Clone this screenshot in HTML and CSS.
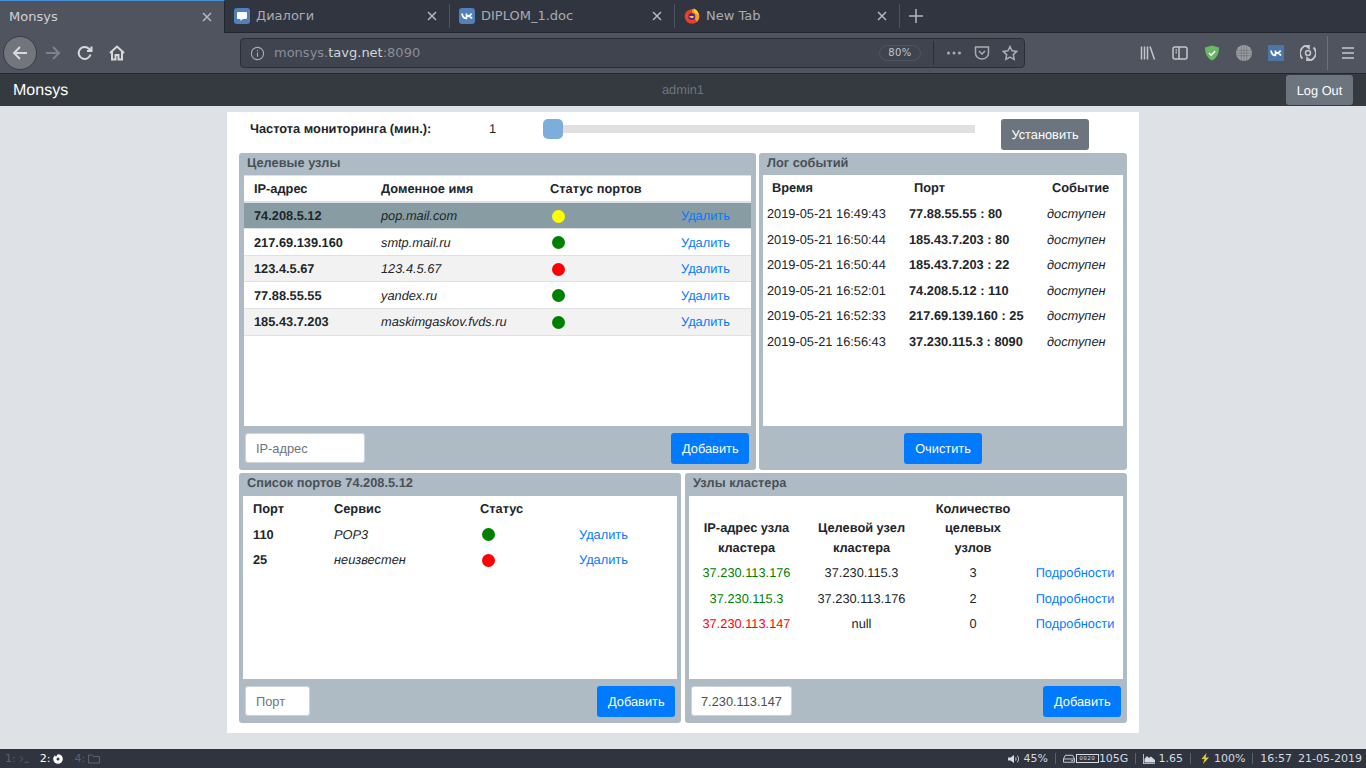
FILE: index.html
```html
<!DOCTYPE html>
<html lang="ru">
<head>
    <meta charset="UTF-8">
    <meta name="viewport" content="width=device-width, initial-scale=1.0">
    <title>Monsys</title>
    <link rel="stylesheet" href="styles.css">
</head>
<body>
    <!-- browser: tabs -->
    <div class="tabbar">
        <div class="tab tab-active">
            <span class="tab-title">Monsys</span>
            <svg class="tab-close" viewBox="0 0 12 12"><path d="M2 2l8 8M10 2l-8 8"/></svg>
        </div>
        <div class="tab">
            <svg class="favicon" viewBox="0 0 16 16"><rect width="16" height="16" rx="3" fill="#5181b8"/><path d="M4 4h8a1 1 0 0 1 1 1v5a1 1 0 0 1-1 1H9l-2.500 2v-2H4a1 1 0 0 1-1-1V5a1 1 0 0 1 1-1z" fill="#fff"/></svg>
            <span class="tab-title">Диалоги</span>
            <svg class="tab-close" viewBox="0 0 12 12"><path d="M2 2l8 8M10 2l-8 8"/></svg>
        </div>
        <div class="tab">
            <svg class="favicon" viewBox="0 0 16 16"><rect width="16" height="16" rx="3" fill="#5181b8"/><path d="M3 5.500c.5 3 2 5 4.500 5V5.500M12.500 5.500C12 7 10.500 8 8 8c2.500 0 4 1 5 2.500" fill="none" stroke="#fff" stroke-width="1.700"/></svg>
            <span class="tab-title">DIPLOM_1.doc</span>
            <svg class="tab-close" viewBox="0 0 12 12"><path d="M2 2l8 8M10 2l-8 8"/></svg>
        </div>
        <div class="tab">
            <svg class="favicon" viewBox="0 0 16 16"><circle cx="8" cy="8.500" r="7.300" fill="#e8412a"/><path d="M8 1.200a7.300 7.300 0 0 1 7.300 7.300c0 2-1 4-2.500 5.200L10 9 8 4z" fill="#ff9a1f"/><path d="M9.500 0.300c2.500 1 4.500 3 5.300 6.500L10.500 4.500z" fill="#ffd43a"/><circle cx="7.800" cy="8.600" r="3.500" fill="#4b2a9a"/><path d="M5 8h5l-1 2H7z" fill="#ffcb2e"/></svg>
            <span class="tab-title">New Tab</span>
            <svg class="tab-close" viewBox="0 0 12 12"><path d="M2 2l8 8M10 2l-8 8"/></svg>
        </div>
        <svg class="tab-new" viewBox="0 0 16 16"><path d="M8 1v14M1 8h14"/></svg>
    </div>

    <!-- browser: toolbar -->
    <div class="toolbar">
        <div class="nav-back">
            <svg viewBox="0 0 18 18"><path d="M16 9H3M9 3L3 9l6 6"/></svg>
        </div>
        <div class="nav-btn nav-off">
            <svg viewBox="0 0 18 18"><path d="M2 9h13M9 3l6 6-6 6"/></svg>
        </div>
        <div class="nav-btn">
            <svg viewBox="0 0 18 18"><path d="M14.500 10.500A6 6 0 1 1 13 4.800L15 7M15.500 2.500V7H11"/></svg>
        </div>
        <div class="nav-btn">
            <svg viewBox="0 0 18 18"><path d="M2 9l7-6.500L16 9M4 7.500V15.500h3.500V11h3v4.500H14V7.500"/></svg>
        </div>

        <div class="urlbar">
            <svg class="url-info" viewBox="0 0 16 16"><circle cx="8" cy="8" r="6.500"/><path d="M8 7v4.500M8 4.200v1.300"/></svg>
            <span class="url-text">monsys.<b>tavg.net</b>:8090</span>
            <span class="url-zoom">80%</span>
            <span class="url-sep"></span>
            <div class="url-action"><svg viewBox="0 0 16 16"><circle cx="2.500" cy="8" r="1.500"/><circle cx="8" cy="8" r="1.500"/><circle cx="13.500" cy="8" r="1.500"/></svg></div>
            <div class="url-action"><svg class="line" viewBox="0 0 16 16"><path d="M1.500 2h13v6a6.500 6 0 0 1-13 0zM5 6l3 3 3-3"/></svg></div>
            <div class="url-action"><svg class="line" viewBox="0 0 16 16"><path d="M8 1.500l2 4.300 4.700.6-3.400 3.200.9 4.700L8 12l-4.200 2.300.9-4.700L1.300 6.400 6 5.800z"/></svg></div>
        </div>

        <div class="tool-icons">
            <div class="tool-icon"><svg class="line" viewBox="0 0 16 16"><path d="M1.500 1.500v13M4.500 1.500v13M7.500 1.500v13M10 1.500l4.500 13"/></svg></div>
            <div class="tool-icon"><svg class="line" viewBox="0 0 16 16"><rect x="1" y="2" width="14" height="12" rx="2"/><path d="M7 2v12M3.500 5h1.500M3.500 7.500h1.500"/></svg></div>
            <div class="tool-icon"><svg viewBox="0 0 16 16"><path d="M8 .5l7 2c0 6-2 10.500-7 13-5-2.500-7-7-7-13z" fill="#68b868"/><path d="M5 8l2.200 2.200L11.200 6" fill="none" stroke="#fff" stroke-width="1.500"/></svg></div>
            <div class="tool-icon"><svg viewBox="0 0 16 16"><circle cx="8" cy="8" r="8" fill="#9b9da1"/><path d="M0 5.300h16M0 8h16M0 10.700h16M5.300 0v16M8 0v16M10.700 0v16" stroke="#6f7278" stroke-width=".7"/></svg></div>
            <div class="tool-icon"><svg viewBox="0 0 16 16"><rect width="16" height="16" rx="1" fill="#4a76a8"/><path d="M3 5.500c.5 3 2 5 4.500 5V5.500M12.500 5.500C12 7 10.500 8 8 8c2.500 0 4 1 5 2.500" fill="none" stroke="#fff" stroke-width="1.700"/></svg></div>
            <div class="tool-icon"><svg class="line" viewBox="0 0 16 16"><path d="M2.500 13.500A7.500 7.500 0 0 1 9.500 .8M13.500 2.500A7.500 7.500 0 0 1 6.500 15.200" stroke-width="1.800"/><path d="M9 .2V3.200L6.600 1.500zM7 15.800V12.800L9.400 14.500z"/><circle cx="8" cy="8" r="2.500"/></svg></div>
        </div>
        <span class="tool-sep"></span>
        <div class="tool-icon"><svg class="line" viewBox="0 0 16 16"><path d="M2 3h12M2 8h12M2 13h12"/></svg></div>
    </div>

    <!-- app header -->
    <div class="navbar">
        <span class="brand">Monsys</span>
        <span class="user">admin1</span>
        <button class="btn btn-grey btn-logout">Log Out</button>
    </div>

    <div class="page">
        <div class="container">
            <div class="settings">
                <label class="settings-label">Частота мониторинга (мин.):</label>
                <span class="settings-value">1</span>
                <input class="slider" type="range" min="1" max="60" value="1">
                <button class="btn btn-grey btn-set">Установить</button>
            </div>

            <div class="row">
                <div class="panel panel-hosts">
                    <div class="panel-title">Целевые узлы</div>
                    <div class="panel-body">
                        <table class="grid hosts">
                            <tr><th class="c1">IP-адрес</th><th class="c2">Доменное имя</th><th class="c3">Статус портов</th><th class="c4"></th></tr>
                            <tr class="selected"><td class="ip">74.208.5.12</td><td class="it">pop.mail.com</td><td><span class="dot yellow"></span></td><td><a href="#">Удалить</a></td></tr>
                            <tr><td class="ip">217.69.139.160</td><td class="it">smtp.mail.ru</td><td><span class="dot green"></span></td><td><a href="#">Удалить</a></td></tr>
                            <tr class="odd"><td class="ip">123.4.5.67</td><td class="it">123.4.5.67</td><td><span class="dot red"></span></td><td><a href="#">Удалить</a></td></tr>
                            <tr><td class="ip">77.88.55.55</td><td class="it">yandex.ru</td><td><span class="dot green"></span></td><td><a href="#">Удалить</a></td></tr>
                            <tr class="odd"><td class="ip">185.43.7.203</td><td class="it">maskimgaskov.fvds.ru</td><td><span class="dot green"></span></td><td><a href="#">Удалить</a></td></tr>
                        </table>
                    </div>
                    <div class="panel-foot">
                        <input class="field field-ip" type="text" placeholder="IP-адрес">
                        <button class="btn btn-blue">Добавить</button>
                    </div>
                </div>

                <div class="panel panel-log">
                    <div class="panel-title">Лог событий</div>
                    <div class="panel-body">
                        <table class="log">
                            <tr><th class="c1">Время</th><th class="c2">Порт</th><th class="c3">Событие</th></tr>
                            <tr><td>2019-05-21 16:49:43</td><td class="ip">77.88.55.55 : 80</td><td class="it">доступен</td></tr>
                            <tr><td>2019-05-21 16:50:44</td><td class="ip">185.43.7.203 : 80</td><td class="it">доступен</td></tr>
                            <tr><td>2019-05-21 16:50:44</td><td class="ip">185.43.7.203 : 22</td><td class="it">доступен</td></tr>
                            <tr><td>2019-05-21 16:52:01</td><td class="ip">74.208.5.12 : 110</td><td class="it">доступен</td></tr>
                            <tr><td>2019-05-21 16:52:33</td><td class="ip">217.69.139.160 : 25</td><td class="it">доступен</td></tr>
                            <tr><td>2019-05-21 16:56:43</td><td class="ip">37.230.115.3 : 8090</td><td class="it">доступен</td></tr>
                        </table>
                    </div>
                    <div class="panel-foot foot-center">
                        <button class="btn btn-blue">Очистить</button>
                    </div>
                </div>
            </div>

            <div class="row row-bottom">
                <div class="panel panel-half">
                    <div class="panel-title title-tall">Список портов 74.208.5.12</div>
                    <div class="panel-body body-low">
                        <table class="ports">
                            <tr><th class="c1">Порт</th><th class="c2">Сервис</th><th class="c3">Статус</th><th class="c4"></th></tr>
                            <tr><td class="ip">110</td><td class="it">POP3</td><td><span class="dot green"></span></td><td><a href="#">Удалить</a></td></tr>
                            <tr><td class="ip">25</td><td class="it">неизвестен</td><td><span class="dot red"></span></td><td><a href="#">Удалить</a></td></tr>
                        </table>
                    </div>
                    <div class="panel-foot">
                        <input class="field field-port" type="text" placeholder="Порт">
                        <button class="btn btn-blue">Добавить</button>
                    </div>
                </div>

                <div class="panel panel-half">
                    <div class="panel-title title-tall">Узлы кластера</div>
                    <div class="panel-body body-low">
                        <table class="cluster">
                            <tr><th class="c1">IP-адрес узла кластера</th><th class="c2">Целевой узел кластера</th><th class="c3">Количество целевых узлов</th><th class="c4"></th></tr>
                            <tr><td class="up">37.230.113.176</td><td>37.230.115.3</td><td>3</td><td><a href="#">Подробности</a></td></tr>
                            <tr><td class="up">37.230.115.3</td><td>37.230.113.176</td><td>2</td><td><a href="#">Подробности</a></td></tr>
                            <tr><td class="down">37.230.113.147</td><td>null</td><td>0</td><td><a href="#">Подробности</a></td></tr>
                        </table>
                    </div>
                    <div class="panel-foot">
                        <input class="field field-node" type="text" value="7.230.113.147">
                        <button class="btn btn-blue">Добавить</button>
                    </div>
                </div>
            </div>
        </div>
    </div>

    <!-- desktop status bar -->
    <div class="statusbar">
        <div class="workspaces">
            <span class="ws">1: <svg class="st-icon st-term" viewBox="0 0 12 10"><path d="M1 2l3 3-3 3M6 8.500h5"/></svg></span>
            <span class="ws ws-on">2: <svg class="st-fire" viewBox="0 0 10 10"><path d="M5 .2a4.800 4.800 0 1 1-4.800 4.800C.2 3.500 1 2 2 1.200L3 3c.5-1.200 1-2.200 2-2.800zM5 3.500A1.500 1.500 0 1 0 5 6.500 1.500 1.500 0 0 0 5 3.500z" fill-rule="evenodd"/></svg></span>
            <span class="ws">4: <svg class="st-icon" viewBox="0 0 12 10"><path d="M.5 9V1h4l1 1.500h6V9z"/></svg></span>
        </div>
        <div class="stats">
            <span class="stat"><svg class="st-fill st-vol" viewBox="0 0 12 10"><path d="M0 3.500h2.500L6 1v8L2.500 6.500H0zM7.500 3a2.500 2.500 0 0 1 0 4zM9.500 1.500a5 5 0 0 1 0 7l-.7-.5a4 4 0 0 0 0-6z"/></svg>45%</span>
            <span class="stat"><svg class="st-line st-hdd" viewBox="0 0 13 9"><path d="M.5 5L2.500 1h8l2 4v3.500H.5zM.5 5h12M9 6.800h2"/></svg><span class="hdd-box">0020</span>105G</span>
            <span class="stat"><svg class="st-fill st-chart" viewBox="0 0 12 10"><path d="M0 0h.8v9.200H12V10H0zM1.500 8.500V5L4 2l2 2 2-1.500L12 6v2.500z"/></svg>1.65</span>
            <span class="stat"><svg class="st-bolt" viewBox="0 0 10 11"><path d="M6.500 0L1.500 6h3L3 11l6-6.500H5.700z"/></svg>100%</span>
            <span class="stat stat-last"><span class="time">16:57</span><span>21-05-2019</span></span>
        </div>
    </div>
</body>
</html>
```

FILE: styles.css
```css
* {
    box-sizing: border-box;
}

html, body {
    height: 100%;
}

body {
    margin: 0;
    display: flex;
    flex-direction: column;
    height: 768px;
    overflow: hidden;
    font-family: "Liberation Sans", Arial, sans-serif;
    font-size: 12.8px;
    line-height: 19.2px;
    color: #212529;
}

/* browser tabs */
.tabbar {
    display: flex;
    align-items: center;
    height: 33px;
    background: #31353f;
    border-bottom: 1px solid #23262d;
    font-family: "DejaVu Sans", sans-serif;
    font-size: 13px;
    color: #a9acb3;
    flex: none;
}

.tab {
    display: flex;
    align-items: center;
    width: 225px;
    height: 24px;
    padding: 0 11px 0 9px;
    border-right: 1px solid #4f535e;
}

.tab-active {
    height: 33px;
    margin-bottom: -1px;
    border-top: 1px solid #4a90d9;
    border-right: 1px solid #23262d;
    padding-bottom: 1px;
    background: #50545f;
    color: #cfd1d6;
}

.tab-title {
    flex: 1;
    white-space: nowrap;
}

.favicon {
    width: 16px;
    height: 16px;
    margin-right: 6px;
    flex: none;
}

.tab-close {
    width: 12px;
    height: 12px;
    flex: none;
    fill: none;
    stroke: #b5b8be;
    stroke-width: 1.5;
}

.tab-new {
    width: 16px;
    height: 16px;
    margin-left: 8px;
    fill: none;
    stroke: #b5b8be;
    stroke-width: 1.5;
}

/* browser toolbar */
.toolbar {
    display: flex;
    align-items: center;
    height: 41px;
    padding-left: 3px;
    background: #50545f;
    border-bottom: 1px solid #24272e;
    flex: none;
}

.nav-back {
    display: flex;
    align-items: center;
    justify-content: center;
    width: 34px;
    height: 34px;
    border-radius: 50%;
    background: #72757c;
    border: 1px solid #3a3d45;
}

.nav-back svg, .nav-btn svg {
    width: 18px;
    height: 18px;
    fill: none;
    stroke: #d7d9dc;
    stroke-width: 2;
}

.nav-btn {
    display: flex;
    align-items: center;
    justify-content: center;
    width: 32px;
}

.nav-off svg {
    stroke: #7f828a;
}

.urlbar {
    display: flex;
    align-items: center;
    width: 785px;
    height: 30px;
    margin-left: 107px;
    padding-left: 9px;
    background: #3f444f;
    border: 1px solid #2b2e36;
    border-radius: 4px;
    font-family: "DejaVu Sans", sans-serif;
    font-size: 13px;
    color: #8b8e95;
}

.url-info {
    width: 15px;
    height: 15px;
    fill: none;
    stroke: #a9acb3;
    stroke-width: 1.2;
}

.url-text {
    margin-left: 9px;
    flex: 1;
}

.url-text b {
    font-weight: normal;
    color: #d3d5d9;
}

.url-zoom {
    display: flex;
    align-items: center;
    justify-content: center;
    width: 42px;
    height: 16px;
    border: 1px solid #50545f;
    border-radius: 8px;
    font-size: 10px;
    letter-spacing: .5px;
    color: #c2c4c8;
}

.url-sep {
    width: 1px;
    height: 24px;
    margin: 0 6px 0 12px;
    background: #2b2e36;
}

.url-action {
    display: flex;
    align-items: center;
    justify-content: center;
    width: 28px;
}

.url-action svg {
    width: 16px;
    height: 16px;
    fill: #a9acb3;
}

.line {
    fill: none !important;
    stroke: #c4c6cb;
    stroke-width: 1.5;
}

.url-action .line {
    stroke: #a9acb3;
}

.tool-icons {
    display: flex;
    margin-left: 107px;
}

.tool-icon {
    display: flex;
    align-items: center;
    justify-content: center;
    width: 32px;
}

.tool-icon svg {
    width: 16px;
    height: 16px;
}

.tool-sep {
    width: 1px;
    height: 34px;
    margin: 0 4px 0 3px;
    background: #6d7079;
}

/* app header */
.navbar {
    display: grid;
    grid-template-columns: 1fr auto 1fr;
    align-items: center;
    height: 32px;
    padding: 0 13px;
    background: #343a40;
    text-rendering: geometricPrecision;
    flex: none;
}

.brand {
    margin-top: 1px;
    font-size: 16px;
    color: #fff;
}

.user {
    color: #6c757d;
}

.btn {
    height: 31px;
    padding: 0 10px;
    border: 1px solid transparent;
    border-radius: 3px;
    font-family: inherit;
    font-size: 12.8px;
    text-rendering: geometricPrecision;
    color: #fff;
}

.btn-grey {
    background: #6c757d;
}

.btn-blue {
    width: 78px;
    background: #007bff;
}

.btn-logout {
    justify-self: end;
    width: 67px;
    height: 30px;
    padding: 0;
}

/* page */
.page {
    flex: 1;
    padding-top: 6px;
    background: #dee2e6;
    text-rendering: geometricPrecision;
}

.container {
    width: 912px;
    height: 621px;
    margin: 0 auto;
    padding: 0 12px;
    background: #fff;
}

.settings {
    display: flex;
    align-items: flex-start;
    height: 41px;
    padding: 7px 0 0 11px;
}

.settings-label {
    width: 239px;
    font-weight: bold;
    line-height: 20px;
}

.settings-value {
    width: 54px;
    line-height: 20px;
}

.slider {
    -webkit-appearance: none;
    appearance: none;
    width: 432px;
    height: 20px;
    margin: 0;
    background: transparent;
}

.slider::-webkit-slider-runnable-track {
    height: 8px;
    background: #e0e0e0;
}

.slider::-webkit-slider-thumb {
    -webkit-appearance: none;
    width: 20px;
    height: 20px;
    margin-top: -6px;
    border-radius: 5px;
    background: #7dadda;
}

.btn-set {
    margin-left: 26px;
    width: 88px;
    padding: 0;
}

.row {
    display: flex;
    gap: 3px;
}

.row-bottom {
    gap: 4px;
    margin-top: 3px;
}

/* panels */
.panel {
    display: flex;
    flex-direction: column;
    padding: 0 4px;
    background: #afbbc4;
    border-radius: 3px;
}

.panel-hosts {
    width: 517px;
    height: 317px;
    padding: 0 5px;
}

.panel-log {
    width: 368px;
    height: 317px;
}

.panel-half {
    width: 442px;
    height: 250px;
}

.panel-title {
    height: 22px;
    padding-left: 4px;
    font-weight: bold;
    line-height: 19px;
    color: #495057;
}

.panel-hosts .panel-title {
    padding-left: 3px;
}

.title-tall {
    height: 23px;
    line-height: 20px;
}

.panel-body {
    height: 251px;
    background: #fff;
    overflow: hidden;
}

.body-low {
    height: 183px;
}

.panel-foot {
    display: flex;
    align-items: flex-start;
    justify-content: space-between;
    padding: 7px 2px 0 2px;
}

.foot-center {
    justify-content: center;
}

.panel-hosts .panel-foot {
    padding-left: 1px;
}

.field {
    height: 30px;
    padding: 0 10px;
    border: 1px solid #ced4da;
    border-radius: 3px;
    background: #fff;
    font-family: inherit;
    font-size: 12.8px;
    color: #495057;
}

.field::placeholder {
    color: #6c757d;
}

.field-ip {
    width: 120px;
}

.field-port {
    width: 65px;
}

.field-node {
    width: 101px;
    padding: 0 9px;
}

/* tables */
table {
    width: 100%;
    border-collapse: collapse;
    table-layout: fixed;
}

th {
    text-align: left;
    font-weight: bold;
    padding: 3.2px 10px;
    vertical-align: bottom;
}

td {
    padding: 3.2px 10px;
    vertical-align: middle;
}

a {
    color: #007bff;
    text-decoration: none;
}

.ip {
    font-weight: bold;
}

.it {
    font-style: italic;
}

.dot {
    display: block;
    width: 13px;
    height: 13px;
    margin: 1px 0 0 2px;
    border-radius: 50%;
}

.yellow {
    background: #ffff00;
}

.green {
    background: #008000;
}

.red {
    background: #ff0000;
}

.grid th, .grid td {
    height: 26.600px;
    border-bottom: 1px solid #dee2e6;
    padding-top: .4px;
    padding-bottom: 0;
    vertical-align: middle;
}

.grid tr:first-child th {
    border-top: 1px solid #dee2e6;
    border-bottom-width: 2px;
}

.hosts .c1 { width: 127px; }
.hosts .c2 { width: 169px; }
.hosts .c3 { width: 131px; }

.selected {
    background: #889da3;
}

.odd {
    background: #f2f2f2;
}

.log {
    margin-top: .2px;
}

.log .c1 { width: 142px; }
.log .c2 { width: 138px; }

.log th {
    padding: 3.2px 9px;
}

.log td {
    padding: 3.2px 4px;
}

.log .c3 {
    white-space: nowrap;
}

.ports .c1 { width: 81px; }
.ports .c2 { width: 146px; }
.ports .c3 { width: 99px; }

.cluster .c1 { width: 115px; }
.cluster .c2 { width: 115px; }
.cluster .c3 { width: 108px; }

.cluster th, .cluster td {
    padding: 3.2px 4px;
    text-align: center;
}

.cluster th {
    padding-left: 10px;
    padding-right: 10px;
}

.up {
    color: #008000;
}

.down {
    color: #ff0000;
}

/* desktop status bar */
.statusbar {
    display: flex;
    justify-content: space-between;
    align-items: center;
    height: 19px;
    padding: 0 4px 0 5px;
    background: #2f343f;
    font-family: "DejaVu Sans", sans-serif;
    font-size: 11px;
    color: #d3dae3;
    flex: none;
}

.workspaces {
    display: flex;
    gap: 10px;
}

.ws {
    display: flex;
    align-items: center;
    gap: 3px;
    color: #5c616c;
}

.ws-on {
    margin-right: 1px;
    color: #fff;
}

.st-icon {
    width: 12px;
    height: 10px;
    fill: none;
    stroke: #5c616c;
}

.st-term {
    width: 11px;
}

.st-fire {
    width: 10px;
    height: 10px;
    fill: #fff;
}

.stats {
    display: flex;
    align-items: center;
}

.stat {
    display: flex;
    align-items: center;
    height: 11px;
    padding: 0 7px;
    border-right: 1px solid #5c616c;
}

.stat-last {
    padding-right: 0;
    border-right: 0;
}

.st-fill {
    width: 12px;
    height: 10px;
    margin-right: 3px;
    fill: #d3dae3;
}

.st-line {
    width: 12px;
    height: 9px;
    fill: none;
    stroke: #d3dae3;
}

.hdd-box {
    width: 23px;
    height: 9px;
    margin-left: 1px;
    border: 1px solid #d3dae3;
    font-family: "Liberation Mono", monospace;
    font-size: 6px;
    line-height: 7px;
    text-align: center;
    letter-spacing: .4px;
}

.st-bolt {
    width: 10px;
    height: 11px;
    margin: 0 4px 0 2px;
    fill: #e8c93a;
}

.time {
    margin-right: 6px;
}
```
